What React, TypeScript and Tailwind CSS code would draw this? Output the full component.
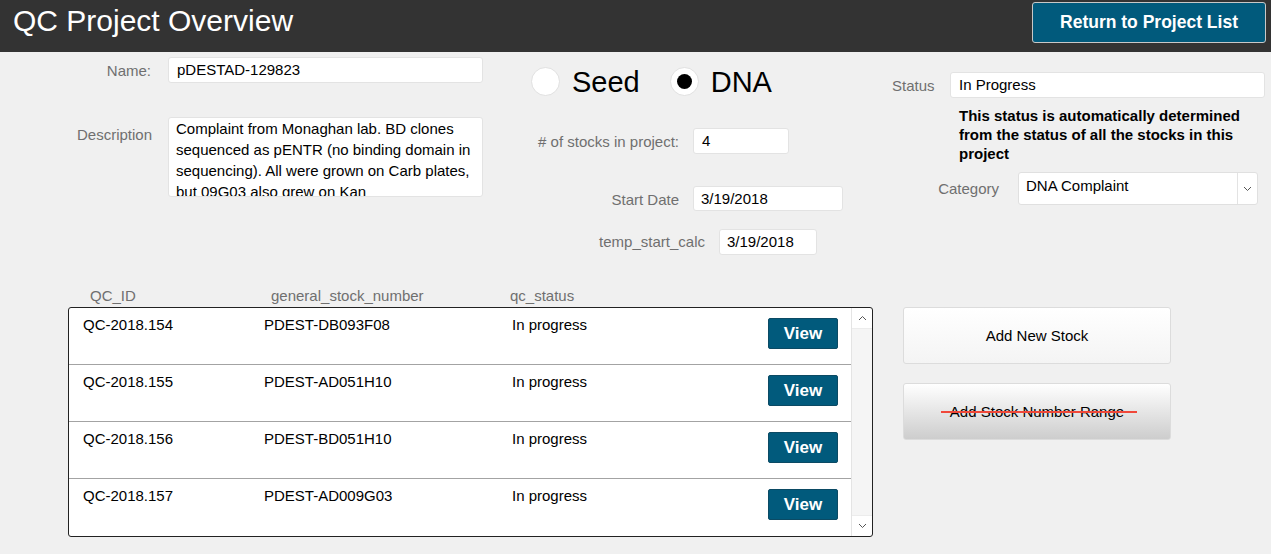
import React from 'react';

const rows = [
  { id: 'QC-2018.154', stock: 'PDEST-DB093F08', status: 'In progress' },
  { id: 'QC-2018.155', stock: 'PDEST-AD051H10', status: 'In progress' },
  { id: 'QC-2018.156', stock: 'PDEST-BD051H10', status: 'In progress' },
  { id: 'QC-2018.157', stock: 'PDEST-AD009G03', status: 'In progress' },
];

const Chevron: React.FC<{ up?: boolean }> = ({ up }) => (
  <svg width="9" height="6" viewBox="0 0 9 6" className="block">
    <path
      d={up ? 'M1 5 L4.5 1.5 L8 5' : 'M1 1 L4.5 4.5 L8 1'}
      fill="none"
      stroke="#555"
      strokeWidth="1"
    />
  </svg>
);

const App: React.FC = () => {
  return (
    <div
      className="w-[1271px] h-[554px] bg-[#f0f0f0] overflow-hidden text-black"
      style={{ fontFamily: '"Liberation Sans", Arial, sans-serif' }}
    >
      <header className="h-[52px] bg-[#333333] flex items-start justify-between">
        <h1 className="ml-[13px] mt-[2px] text-[30px] leading-[37px] text-white">QC Project Overview</h1>
        <button className="mt-[2px] mr-[5px] w-[234px] h-[41px] rounded-[3px] border border-[#c8c8c8] bg-[#015a7c] text-white font-bold text-[17.5px]">
          Return to Project List
        </button>
      </header>

      <div className="flex h-[228px]">
        {/* left column */}
        <div className="w-[490px]">
          <div className="mt-[5px] flex items-center h-[26px]">
            <div className="w-[151px] mt-[3px] text-right text-[15px] text-[#6f6f6f]">Name:</div>
            <div className="ml-[17px] w-[315px] h-[26px] bg-white border border-[#e3e3e3] rounded-[3px] pl-[8px] text-[15px] leading-[24px]">
              pDESTAD-129823
            </div>
          </div>
          <div className="mt-[34px] flex items-start">
            <div className="w-[152px] pt-[7px] text-right text-[15px] text-[#6f6f6f]">Description</div>
            <div className="ml-[16px] w-[315px] h-[80px] overflow-hidden bg-white border border-[#e3e3e3] rounded-[3px] pl-[7px] pr-[4px] text-[15px] leading-[21px]">
              Complaint from Monaghan lab. BD clones sequenced as pENTR (no binding domain in sequencing). All were grown on Carb plates, but 09G03 also grew on Kan
            </div>
          </div>
        </div>

        {/* middle column */}
        <div className="w-[380px]">
          <div className="mt-[15px] h-[29px] flex items-center pl-[41px]">
            <div className="w-[29px] h-[29px] rounded-full bg-white border border-[#e0e0e0]" />
            <span className="ml-[12px] text-[29px] leading-[32px]">Seed</span>
            <div className="ml-[30px] w-[29px] h-[29px] rounded-full bg-white border border-[#e0e0e0] flex items-center justify-center">
              <div className="w-[15px] h-[15px] rounded-full bg-black" />
            </div>
            <span className="ml-[12px] text-[29px] leading-[32px]">DNA</span>
          </div>
          <div className="mt-[32px] flex items-center">
            <div className="w-[189px] mt-[2px] text-right text-[15px] text-[#6f6f6f]"># of stocks in project:</div>
            <div className="ml-[14px] w-[96px] h-[26px] bg-white border border-[#e3e3e3] rounded-[3px] pl-[8px] text-[15px] leading-[24px]">4</div>
          </div>
          <div className="mt-[31px] flex items-center">
            <div className="w-[189px] mt-[4px] text-right text-[15px] text-[#6f6f6f]">Start Date</div>
            <div className="ml-[14px] w-[150px] h-[25px] bg-white border border-[#e3e3e3] rounded-[3px] pl-[7px] text-[15px] leading-[23px]">3/19/2018</div>
          </div>
          <div className="mt-[17px] flex items-center">
            <div className="w-[215px] mt-[2px] text-right text-[15px] text-[#6f6f6f]">temp_start_calc</div>
            <div className="ml-[14px] w-[98px] h-[26px] bg-white border border-[#e3e3e3] rounded-[3px] pl-[7px] text-[15px] leading-[24px]">3/19/2018</div>
          </div>
        </div>

        {/* right column */}
        <div className="flex-1">
          <div className="mt-[20px] flex items-center">
            <div className="w-[80px] mt-[3px] pl-[22px] text-[15px] text-[#6f6f6f]">Status</div>
            <div className="w-[315px] h-[26px] bg-white border border-[#e3e3e3] rounded-[3px] pl-[8px] text-[15px] leading-[24px]">In Progress</div>
          </div>
          <p className="mt-[8px] ml-[89px] w-[300px] text-[15px] leading-[19px] font-bold">
            This status is automatically determined from the status of all the stocks in this project
          </p>
          <div className="mt-[9px] flex items-center">
            <div className="w-[129px] mt-[2px] text-right text-[15px] text-[#6f6f6f]">Category</div>
            <div className="ml-[19px] w-[240px] h-[33px] bg-white border border-[#e0e0e0] rounded-[3px] flex">
              <div className="flex-1 pl-[7px] text-[15px] leading-[26px]">DNA Complaint</div>
              <div className="w-[20px] border-l border-[#e3e3e3] flex items-center justify-center">
                <Chevron />
              </div>
            </div>
          </div>
        </div>
      </div>

      {/* table headers */}
      <div className="mt-[6px] h-[19px] flex text-[15px] leading-[19px] text-[#6f6f6f]">
        <div className="w-[271px] pl-[90px]">QC_ID</div>
        <div className="w-[239px]">general_stock_number</div>
        <div>qc_status</div>
      </div>

      <div className="mt-[2px] flex items-start">
        <div className="ml-[68px] w-[805px] h-[230px] border border-[#222] rounded-[3px] bg-white flex overflow-hidden">
          <div className="w-[782px]">
            {rows.map((r, i) => (
              <div
                key={r.id}
                className={`h-[57px] flex items-start text-[15px] leading-[18px] ${
                  i < rows.length - 1 ? 'border-b border-[#a3a3a3]' : ''
                }`}
              >
                <div className="w-[195px] pl-[14px] pt-[8px]">{r.id}</div>
                <div className="w-[248px] pt-[8px]">{r.stock}</div>
                <div className="flex-1 pt-[8px]">{r.status}</div>
                <button className="mt-[10px] mr-[13px] w-[70px] h-[31px] rounded-[2px] border border-[#0b4a64] bg-[#015a7c] text-white font-bold text-[17px]">
                  View
                </button>
              </div>
            ))}
          </div>
          <div className="w-[21px] border-l border-[#e4e4e4] flex flex-col">
            <div className="h-[21px] flex items-center justify-center border-b border-[#ececec]">
              <Chevron up />
            </div>
            <div className="flex-1 bg-[#f5f5f5]" />
            <div className="h-[21px] flex items-center justify-center border-t border-[#ececec]">
              <Chevron />
            </div>
          </div>
        </div>

        <div className="ml-[30px] flex flex-col gap-[19px]">
          <button className="w-[268px] h-[57px] rounded-[3px] border border-[#dcdcdc] bg-gradient-to-b from-white to-[#f4f4f4] text-[15px] pt-[2px]">
            Add New Stock
          </button>
          <button className="w-[268px] h-[57px] rounded-[3px] border border-[#dcdcdc] bg-gradient-to-b from-white to-[#cdcdcd] text-[15px] pt-[2px]">
            <span className="relative inline-block">
              Add Stock Number Range
              <span className="absolute left-[-9px] right-[-13px] top-[10px] h-[2px] bg-[#f0483a]" />
            </span>
          </button>
        </div>
      </div>
    </div>
  );
};

export default App;
